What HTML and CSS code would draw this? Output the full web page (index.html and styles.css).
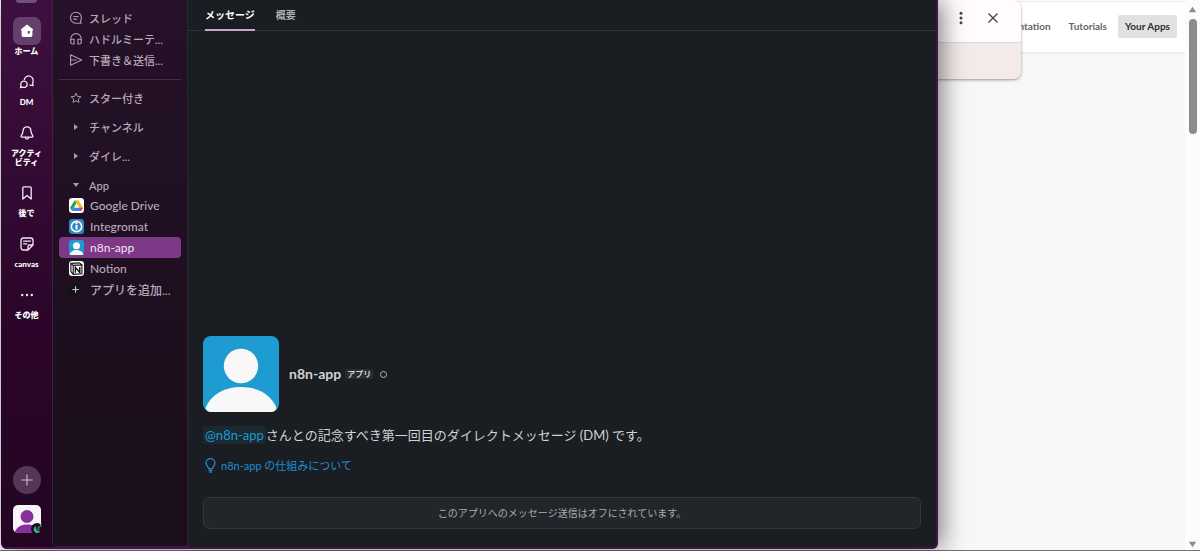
FILE: index.html
```html
<!DOCTYPE html>
<html lang="ja">

<head>
    <title>n8n-app - Slack</title>
    <meta charset="UTF-8">
    <link rel="stylesheet" href="styles.css">
</head>

<body>
    <div class="desktop">
        <!-- browser -->
        <div class="browser">
            <div class="page">
                <header class="page-head">
                    <nav class="page-nav">
                        <a href="#">Documentation</a>
                        <a href="#">Tutorials</a>
                        <a href="#" class="current">Your Apps</a>
                    </nav>
                </header>
            </div>
            <div class="scrollbar">
                <svg width="9" height="7" viewBox="0 0 9 7"><path d="M4.5 .8 8.2 6.2H.8z" /></svg>
                <div class="thumb"></div>
                <svg width="9" height="7" viewBox="0 0 9 7"><path d="M4.5 6.2.8.8h7.4z" /></svg>
            </div>
        </div>

        <!-- popup -->
        <div class="popup">
            <div class="popup-head">
                <button class="popup-btn" aria-label="メニュー">
                    <svg width="16" height="16" viewBox="0 0 16 16" fill="#4a4548"><circle cx="8" cy="3.3" r="1.5" /><circle cx="8" cy="8" r="1.5" /><circle cx="8" cy="12.7" r="1.5" /></svg>
                </button>
                <button class="popup-btn" aria-label="閉じる">
                    <svg width="16" height="16" viewBox="0 0 16 16" stroke="#4a4548" stroke-width="1.4"><path d="M3.5 3.5l9 9M12.5 3.5l-9 9" /></svg>
                </button>
            </div>
            <div class="popup-body"></div>
        </div>

        <!-- slack -->
        <div class="slack">
            <nav class="rail">
                <div class="workspace"></div>
                <a href="#" class="rail-item active">
                    <span class="rail-icon"><svg width="16" height="16" viewBox="0 0 16 16"><path fill="#fff" d="M8 1.6 14 6.2c.5.5.1 1.3-.6 1.3V12c0 1.3-.8 2.1-2.1 2.1H4.7c-1.3 0-2.1-.8-2.1-2.1V7.5C1.900 7.500 1.500 6.700 2 6.200z" /><path fill="#64406a" d="M8.800 8h2v2.600h-2z" /></svg></span>
                    <span class="rail-label">ホーム</span>
                </a>
                <a href="#" class="rail-item">
                    <span class="rail-icon"><svg class="line" width="16" height="16" viewBox="0 0 16 16"><path d="M5.300 5.500a4.500 4.500 0 1 1 8.300 3.200l.5 2.900-3.200-.4" /><path d="M5.200 7.200a3.100 3.100 0 1 1-1.400 5.900l-2.300.4.400-2.200a3.100 3.100 0 0 1 3.300-4.100z" /></svg></span>
                    <span class="rail-label">DM</span>
                </a>
                <a href="#" class="rail-item">
                    <span class="rail-icon"><svg class="line" width="16" height="16" viewBox="0 0 16 16"><path d="M8 1.800c-2.400 0-3.800 1.700-3.900 4-.1 2.700-1.100 3.500-1.900 5-.4.700-.1 1.300.7 1.300h10.200c.8 0 1.100-.6.7-1.300-.8-1.500-1.800-2.300-1.900-5-.1-2.300-1.500-4-3.900-4zM6.200 12.300c.1 1.200.8 1.900 1.800 1.900s1.700-.7 1.800-1.900" /></svg></span>
                    <span class="rail-label">アクティ<br>ビティ</span>
                </a>
                <a href="#" class="rail-item">
                    <span class="rail-icon"><svg class="line" width="16" height="16" viewBox="0 0 16 16"><path d="M3.800 3c0-.7.400-1.100 1.100-1.100h6.200c.7 0 1.100.4 1.100 1.100v11L8 10.500 3.800 14z" /></svg></span>
                    <span class="rail-label">後で</span>
                </a>
                <a href="#" class="rail-item">
                    <span class="rail-icon"><svg class="line" width="16" height="16" viewBox="0 0 16 16"><path d="M9 14H4.500C2.900 14 2 13.100 2 11.500v-7C2 2.900 2.900 2 4.500 2h7C13.100 2 14 2.900 14 4.500V9L9 14zM9 13.800V10.500C9 9.500 9.500 9 10.500 9h3.400M4.600 5.200h6.800M4.600 7.800h3.200" /></svg></span>
                    <span class="rail-label">canvas</span>
                </a>
                <a href="#" class="rail-item">
                    <span class="rail-icon"><svg width="16" height="16" viewBox="0 0 16 16" fill="#f3e9f3"><circle cx="3.200" cy="8" r="1.200" /><circle cx="8" cy="8" r="1.200" /><circle cx="12.800" cy="8" r="1.200" /></svg></span>
                    <span class="rail-label">その他</span>
                </a>
                <div class="rail-bottom">
                    <button class="add-btn" aria-label="新規作成">
                        <svg width="12" height="12" viewBox="0 0 12 12" stroke="#d3b9d5" stroke-width="1.100"><path d="M6 .5v11M.5 6h11" /></svg>
                    </button>
                    <button class="me" aria-label="プロフィール">
                        <svg width="28" height="28" viewBox="0 0 28 28"><rect width="28" height="28" rx="5" fill="#f8f5fa" /><circle cx="14" cy="11.500" r="6.500" fill="#86309a" /><path d="M2 27c1.500-5 6-7.500 12-7.500S24.500 22 26 27l-2 1H4z" fill="#86309a" /></svg>
                        <svg class="away" width="12" height="12" viewBox="0 0 12 12"><circle cx="6" cy="6" r="6" fill="#230722" /><path d="M5.300 3.100a3.500 3.500 0 1 0 4.100 4.700c-2.800.8-5-1.600-4.100-4.700z" fill="#35b07c" /><path d="M6.500 4h2L6.600 6.200h2.100M8.700 1.400h1.800L8.800 3.300h1.800" fill="none" stroke="#35b07c" stroke-width=".9" /></svg>
                    </button>
                </div>
            </nav>

            <aside class="sidebar">
                <div class="group">
                    <a href="#" class="row"><svg class="row-icon" viewBox="0 0 16 16"><path d="M13.900 14H8a6.300 6.300 0 1 1 6.200-6.200c0 1.500-.5 2.700-1.200 3.700zM5 6.300h6M5 9.300h4.300" /></svg><span>スレッド</span></a>
                    <a href="#" class="row"><svg class="row-icon" viewBox="0 0 16 16"><path d="M2 12V7.800a6 6 0 0 1 12 0V12M5.800 8.300v5.400H4c-1.200 0-2-.8-2-2V10c0-1.200.8-1.700 2-1.700zM10.200 8.300v5.400H12c1.200 0 2-.8 2-2V10c0-1.200-.8-1.700-2-1.700z" /></svg><span>ハドルミーテ...</span></a>
                    <a href="#" class="row"><svg class="row-icon" viewBox="0 0 16 16"><path d="M1.800 2 14.500 8 1.800 14V2zM1.800 8h7" /></svg><span>下書き＆送信...</span></a>
                </div>
                <div class="sections">
                    <a href="#" class="section"><svg class="row-icon small" viewBox="0 0 16 16"><path d="m8 1.600 1.900 4.200 4.600.5-3.400 3.100.9 4.500L8 11.600l-4 2.300.9-4.500L1.500 6.300l4.600-.5z" /></svg><span>スター付き</span></a>
                    <button class="section"><i class="arrow"></i><span>チャンネル</span></button>
                    <button class="section"><i class="arrow"></i><span>ダイレ...</span></button>
                    <button class="section"><i class="arrow open"></i><span>App</span></button>
                </div>
                <a href="#" class="row app">
                    <svg class="app-icon" viewBox="0 0 16 16"><rect width="16" height="16" rx="3.500" fill="#fff" /><path fill="#fbbc04" d="M6 2.300h4L15 10.500h-4z" /><path fill="#1ea362" d="M6 2.300 8 5.600 3.200 13.700 1 10.500z" /><path fill="#4285f4" d="M5.100 10.500H15l-2.200 3.400H3.100z" /><path fill="#ea4335" d="M11 10.500h4l-2.200 3.400z" /></svg>
                    <span>Google Drive</span>
                </a>
                <a href="#" class="row app">
                    <svg class="app-icon" viewBox="0 0 16 16"><rect width="16" height="16" rx="3.500" fill="#2f87bf" /><circle cx="8" cy="8" r="5.500" fill="none" stroke="#fff" stroke-width="1.700" /><path fill="#fff" d="M6.900 3.500h2.200v2H6.900zM6.900 6.300h2.200v5H6.900z" /></svg>
                    <span>Integromat</span>
                </a>
                <a href="#" class="row app selected">
                    <svg class="app-icon" viewBox="0 0 76 76"><rect width="76" height="76" rx="14" fill="#1e9bd1" /><circle cx="38" cy="29" r="18" fill="#f8f8f8" /><path fill="#f8f8f8" d="M3 73C7 60 21 51 38 51s31 9 35 22l-5 3H8z" /></svg>
                    <span>n8n-app</span>
                </a>
                <a href="#" class="row app">
                    <svg class="app-icon" viewBox="0 0 16 16"><rect width="16" height="16" rx="3.500" fill="#fff" /><path fill="#fff" stroke="#111" stroke-width="1.200" d="M2 2.500 10.800 2 13.800 4v9.600L4.500 14.200 2 11.200zM2 2.500l2.600 2.200 9.200-.6M4.500 4.700v9.400" /><path fill="none" stroke="#111" stroke-width="1.500" d="M6.800 12.500V6.800l4.700 5.500V6.300" /></svg>
                    <span>Notion</span>
                </a>
                <a href="#" class="row app">
                    <svg class="app-icon" viewBox="0 0 16 16"><rect width="14" height="14" y="1" rx="3" fill="#17111a" /><path stroke="#cfc3d1" stroke-width="1.200" d="M7 4.500v7M3.500 8h7" /></svg>
                    <span>アプリを追加...</span>
                </a>
            </aside>

            <main class="main">
                <nav class="tabs">
                    <button class="tab on">メッセージ</button>
                    <button class="tab">概要</button>
                </nav>
                <div class="messages">
                    <div class="who">
                        <svg class="avatar" viewBox="0 0 76 76"><rect width="76" height="76" rx="8" fill="#1e9bd1" /><circle cx="38" cy="30" r="17.200" fill="#f8f8f8" /><path fill="#f8f8f8" d="M2.500 72C8 58.500 21 51 38 51s30 7.500 35.500 21c-1 2.500-2.500 4-5.500 4H8c-3 0-4.500-1.500-5.500-4z" /></svg>
                        <h1 class="name">n8n-app</h1>
                        <span class="badge">アプリ</span>
                        <span class="presence"></span>
                    </div>
                    <p class="intro"><a href="#" class="mention">@n8n-app</a>さんとの記念すべき第一回目のダイレクトメッセージ (DM) です。</p>
                    <a href="#" class="about">
                        <svg width="11" height="15" viewBox="0 0 11 15"><path fill="none" stroke="currentColor" stroke-width="1.300" d="M3.600 10.600C3.400 8.600 1 7.800 1 5.100a4.500 4.400 0 0 1 9 0c0 2.700-2.400 3.500-2.600 5.500zM3.700 12.300h3.600M4.200 14h2.600" /></svg>
                        <span>n8n-app の仕組みについて</span>
                    </a>
                    <div class="off">このアプリへのメッセージ送信はオフにされています。</div>
                </div>
            </main>
        </div>
    </div>
</body>

</html>
```
FILE: styles.css
```css
* {
    box-sizing: border-box;
}

body {
    margin: 0;
    font-family: Lato, "Noto Sans CJK JP", sans-serif;
    font-size: 11px;
}

a {
    color: inherit;
    text-decoration: none;
}

button {
    margin: 0;
    padding: 0;
    border: 0;
    background: none;
    color: inherit;
    font: inherit;
    cursor: pointer;
}

svg {
    display: block;
    flex: none;
}

.desktop {
    position: relative;
    height: 100vh;
    overflow: hidden;
    background: #a5a0a3;
}

/* browser */
.browser {
    display: flex;
    height: 100%;
    border-top: 1px solid #fffaf8;
    border-bottom: 1px solid #7a7073;
}

.page {
    flex: 1;
    background: #f7f7f7;
    border-top: 1px solid #f3e8e4;
}

.page-head {
    height: 52px;
    padding: 13px 8px;
    background: #fff;
    border-bottom: 2px solid #ececec;
}

.page-nav {
    display: flex;
    justify-content: flex-end;
    gap: 4px;
    color: #666;
    font-weight: bold;
    font-size: 10px;
    line-height: 23px;
}

.page-nav a {
    padding: 0 7px;
    border-radius: 2px;
}

.page-nav .current {
    background: #e1e1e1;
    color: #2c2c2c;
}

.scrollbar {
    display: flex;
    flex-direction: column;
    align-items: center;
    width: 15px;
    padding: 5px 0 2px;
    background: #fcfcfc;
    fill: #8b8b8b;
}

.thumb {
    width: 8px;
    height: 115px;
    margin: 6px 0 auto;
    border-radius: 4px;
    background: #8b8b8b;
}

/* popup */
.popup {
    position: absolute;
    top: 0;
    right: 179px;
    width: 200px;
    border-radius: 8px;
    overflow: hidden;
    box-shadow: 0 1px 3px rgba(0, 0, 0, .4);
}

.popup-head {
    display: flex;
    justify-content: flex-end;
    gap: 16px;
    height: 43px;
    padding: 10px 20px;
    background: #fffbff;
    border-bottom: 1px solid #dedadf;
}

.popup-btn {
    width: 16px;
    height: 16px;
}

.popup-body {
    height: 36px;
    background: #f4eaea;
}

/* slack window */
.slack {
    position: absolute;
    top: 0;
    right: 262px;
    bottom: 2px;
    left: 1px;
    display: flex;
    padding: 0 2px 2px 0;
    border-radius: 0 0 6px 6px;
    background: linear-gradient(#3d103f, #2b0529 60%, #230522);
    box-shadow: 4px 0 24px rgba(0, 0, 0, .5);
    color: #b9a8bb;
}

.slack::after {
    content: "";
    position: absolute;
    inset: 0;
    border: solid #471148;
    border-width: 0 2px 2px 0;
    border-radius: 0 0 6px 6px;
    pointer-events: none;
}

.rail {
    display: flex;
    flex-direction: column;
    align-items: center;
    width: 51px;
    padding-bottom: 14px;
    color: #fff;
}

.workspace {
    width: 21px;
    height: 3px;
    margin-bottom: 14px;
    border-radius: 0 0 3px 3px;
    background: #70507a;
}

.rail-item {
    display: flex;
    flex-direction: column;
    align-items: center;
    gap: 2px;
    margin-bottom: 12px;
}

.rail-icon {
    display: grid;
    place-items: center;
    width: 28px;
    height: 28px;
    border-radius: 7px;
}

.active .rail-icon {
    background: #64406a;
}

.rail-label {
    font-size: 8px;
    font-weight: 900;
    line-height: 9px;
    text-align: center;
}

.line {
    fill: none;
    stroke: #f3e9f3;
    stroke-width: 1.3;
    stroke-linejoin: round;
    stroke-linecap: round;
}

.rail-bottom {
    display: flex;
    flex-direction: column;
    gap: 11px;
    margin-top: auto;
}

.add-btn {
    display: grid;
    place-items: center;
    width: 28px;
    height: 28px;
    border-radius: 50%;
    background: #563657;
}

.me {
    position: relative;
}

.away {
    position: absolute;
    right: -2px;
    bottom: -2px;
}

/* sidebar */
.sidebar {
    width: 135px;
    padding: 7px 6px 0;
    border: solid #3d2140;
    border-width: 0 0 1px 1px;
    border-radius: 0 0 0 5px;
    background: linear-gradient(#251128, #1f0f21 50%, #190e19);
}

.group {
    padding-bottom: 9px;
    border-bottom: 1px solid #402e44;
}

.row,
.section {
    display: flex;
    align-items: center;
    gap: 6px;
    width: 100%;
    height: 21px;
    padding-left: 10px;
    font-weight: 500;
    white-space: nowrap;
    text-align: left;
}

.row-icon {
    width: 14px;
    height: 14px;
    fill: none;
    stroke: #ad9bb0;
    stroke-width: 1.3;
    stroke-linejoin: round;
}

.row-icon.small {
    width: 12px;
    height: 12px;
    margin: 0 1px;
}

.sections {
    display: flex;
    flex-direction: column;
    gap: 9px;
    padding-top: 8px;
}

.section {
    height: 20px;
}

.arrow {
    width: 14px;
    height: 6px;
    background: #ad9bb0;
    clip-path: polygon(5px 0, 9px 50%, 5px 100%);
}

.arrow.open {
    clip-path: polygon(4px 1px, 10px 1px, 50% 5px);
}

.app {
    border-radius: 4px;
    font-size: 12px;
}

.app-icon {
    width: 15px;
    height: 15px;
}

.selected {
    background: #7d3986;
    color: #eadcec;
}

/* main */
.main {
    display: flex;
    flex: 1;
    flex-direction: column;
    background: #1a1d21;
    border-left: 1px solid #302535;
    color: #d1d2d3;
}

.tabs {
    display: flex;
    gap: 21px;
    height: 31px;
    padding-left: 17px;
    border-bottom: 1px solid #303237;
    font-size: 10px;
    font-weight: bold;
}

.tab {
    height: 31px;
    border-bottom: 2px solid transparent;
    color: #ababad;
}

.tab.on {
    border-color: #c9a5d0;
    color: #fff;
}

.messages {
    display: flex;
    flex: 1;
    flex-direction: column;
    justify-content: flex-end;
    padding: 0 15px 18px;
}

.who {
    display: flex;
    align-items: center;
    margin-bottom: 13px;
}

.avatar {
    width: 76px;
    height: 76px;
    margin-right: 10px;
}

.name {
    margin: 0 4px 0 0;
    font-size: 14px;
    line-height: 20px;
}

.badge {
    padding: 0 2px;
    border-radius: 2px;
    background: #2a2c31;
    font-size: 8px;
    font-weight: bold;
    line-height: 10px;
}

.presence {
    width: 7px;
    height: 7px;
    margin-left: 7px;
    border: 1px solid #b5b6b8;
    border-radius: 50%;
}

.intro {
    margin: 0 0 10px;
    font-size: 13px;
    line-height: 20px;
}

.mention {
    padding: 1px 2px;
    border-radius: 3px;
    background: #1b2a32;
    color: #1d9bd1;
}

.about {
    display: flex;
    align-items: center;
    gap: 5px;
    height: 20px;
    margin-bottom: 22px;
    padding-left: 2px;
    color: #1d8fcf;
}

.off {
    border: 1px solid #35373b;
    border-radius: 7px;
    background: #222529;
    color: #ababad;
    font-size: 10px;
    line-height: 30px;
    text-align: center;
}
```
